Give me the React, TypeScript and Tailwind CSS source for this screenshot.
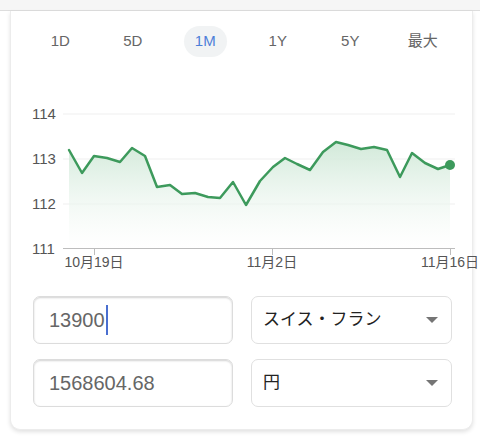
import React from 'react';

const TABS = ['1D', '5D', '1M', '1Y', '5Y', '最大'];

const POINTS: [number, number][] = [
  [69, 151], [82, 174], [94, 157], [107, 159], [120, 163], [132, 149], [145, 157], [157, 188],
  [170, 186], [182, 195], [195, 194], [208, 198], [220, 199], [233, 183], [246, 206], [260, 182],
  [273, 168], [285, 159], [297, 165], [310, 171], [323, 153], [336, 143], [348, 146], [361, 150],
  [374, 148], [387, 151], [400, 178], [412, 154], [425, 164], [438, 170], [450, 166],
];

const linePath = POINTS.map(([x, y], i) => `${i ? 'L' : 'M'}${x} ${y}`).join(' ');
const areaPath = `${linePath} L450 249 L69 249 Z`;

const Chart: React.FC = () => (
  <svg width="462" height="180" className="block overflow-visible" style={{ fontFamily: '"Liberation Sans", "Noto Sans CJK JP", sans-serif' }}>
    <defs>
      <linearGradient id="fill" x1="0" y1="0" x2="0" y2="1">
        <stop offset="0" stopColor="#cfe8d7" stopOpacity="0.95" />
        <stop offset="1" stopColor="#ffffff" stopOpacity="0.4" />
      </linearGradient>
    </defs>
    <g transform="translate(-11,-92)">
      {[115, 160, 205].map(y => (
        <line key={y} x1="63" x2="455" y1={y} y2={y} stroke="#efefef" strokeWidth="1" />
      ))}
      <path d={areaPath} fill="url(#fill)" />
      <line x1="63" x2="455" y1="249.5" y2="249.5" stroke="#bdbdbd" strokeWidth="1" />
      {[94, 272, 450].map(x => (
        <line key={x} x1={x + 0.5} x2={x + 0.5} y1="249" y2="256" stroke="#bdbdbd" strokeWidth="1" />
      ))}
      {[['114', 120], ['113', 165], ['112', 210], ['111', 255]].map(([t, y]) => (
        <text key={t} x="32" y={y} fontSize="15" fill="#555">{t}</text>
      ))}
      <text x="94" y="268" fontSize="14" fill="#555" textAnchor="middle">10月19日</text>
      <text x="272" y="268" fontSize="14" fill="#555" textAnchor="middle">11月2日</text>
      <text x="450" y="268" fontSize="14" fill="#555" textAnchor="middle">11月16日</text>
      <path d={linePath} fill="none" stroke="#3d9a5c" strokeWidth="2.5" strokeLinejoin="round" strokeLinecap="round" />
      <circle cx="450" cy="166" r="5" fill="#3d9a5c" />
    </g>
  </svg>
);

const Caret: React.FC = () => (
  <svg width="12" height="6" viewBox="0 0 12 6"><path d="M0 0 L12 0 L6 6 Z" fill="#757575" /></svg>
);

export default function App() {
  return (
    <div className="w-[480px] h-[440px] bg-white overflow-hidden" style={{ fontFamily: '"Liberation Sans", "Noto Sans CJK JP", sans-serif' }}>
      <div className="h-[11px] bg-[#f6f6f6] border-b border-[#dddddd]" />
      <div className="ml-[10px] w-[463px] bg-white border-x border-b border-[#ececec] rounded-b-[10px] shadow-[0_2px_4px_rgba(0,0,0,0.12)]">
        <div className="flex px-[13px] pt-[15px]">
          {TABS.map(t => (
            <div key={t} className="flex-1 flex justify-center">
              <div className={`h-[31px] w-[43px] rounded-full flex items-center justify-center text-[15px] ${t === '1M' ? 'bg-[#f1f3f4] text-[#4e7fd8]' : 'text-[#666]'}`}>
                {t}
              </div>
            </div>
          ))}
        </div>
        <div className="mt-[34px]">
          <Chart />
        </div>
        <div className="grid grid-cols-[200px_201px] gap-x-[18px] gap-y-[15px] pl-[22px] pt-[25px] pb-[22px]">
          <div className="h-[48px] rounded-[7px] border border-[#dcdcdc] shadow-[inset_0_1px_2px_rgba(0,0,0,0.18)] flex items-center pl-[15px] text-[20px] text-[#666]">
            13900<span className="inline-block w-[2px] h-[30px] bg-[#4a6fd0] ml-[1px]" />
          </div>
          <div className="h-[48px] rounded-[7px] border border-[#e0e0e0] flex items-center justify-between pl-[11px] pr-[13px] text-[17px] text-[#222]">
            <span>スイス・フラン</span>
            <Caret />
          </div>
          <div className="h-[48px] rounded-[7px] border border-[#dcdcdc] shadow-[inset_0_1px_2px_rgba(0,0,0,0.18)] flex items-center pl-[15px] text-[20px] text-[#666]">
            1568604.68
          </div>
          <div className="h-[48px] rounded-[7px] border border-[#e0e0e0] flex items-center justify-between pl-[11px] pr-[13px] text-[17px] text-[#222]">
            <span>円</span>
            <Caret />
          </div>
        </div>
      </div>
    </div>
  );
}
